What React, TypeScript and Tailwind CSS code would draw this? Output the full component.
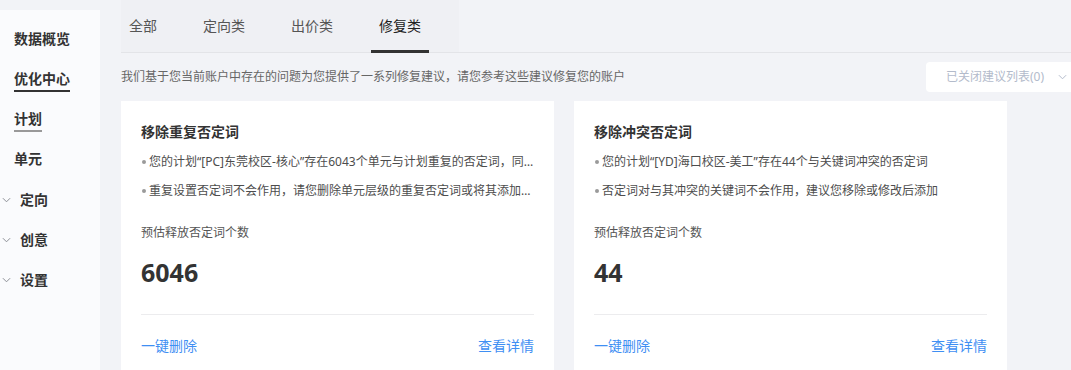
import React from 'react';

const FONT = { fontFamily: '"Noto Sans", "Noto Sans CJK SC", sans-serif' };

const Chevron: React.FC<{ className?: string }> = ({ className = '' }) => (
  <svg viewBox="0 0 10 6" className={className} fill="none" stroke="currentColor" strokeWidth="1.1">
    <path d="M1 1l4 4 4-4" />
  </svg>
);

type NavItem = { label: string; chevron?: boolean; line?: 'dark' | 'gray' };

const navItems: NavItem[] = [
  { label: '数据概览' },
  { label: '优化中心', line: 'dark' },
  { label: '计划', line: 'gray' },
  { label: '单元' },
  { label: '定向', chevron: true },
  { label: '创意', chevron: true },
  { label: '设置', chevron: true },
];

const tabs = ['全部', '定向类', '出价类', '修复类'];

const cards = [
  {
    title: '移除重复否定词',
    bullets: [
      '您的计划“[PC]东莞校区-核心”存在6043个单元与计划重复的否定词，同时这些否定词在计划层级已经设置',
      '重复设置否定词不会作用，请您删除单元层级的重复否定词或将其添加到计划层级',
    ],
    value: '6046',
  },
  {
    title: '移除冲突否定词',
    bullets: [
      '您的计划“[YD]海口校区-美工”存在44个与关键词冲突的否定词',
      '否定词对与其冲突的关键词不会作用，建议您移除或修改后添加',
    ],
    value: '44',
  },
];

const Sidebar: React.FC = () => (
  <div className="w-[100px] shrink-0 mt-[10px] bg-[#fafbfd] pt-[9px]">
    {navItems.map((item) => (
      <div key={item.label} className="h-[40px] flex items-center">
        {item.chevron ? (
          <>
            <div className="w-[20px] pl-[2px] pt-[1px]">
              <Chevron className="w-[9px] h-[6px] text-[#8a8d94]" />
            </div>
            <span className="text-[14px] font-semibold text-[#333]">{item.label}</span>
          </>
        ) : (
          <span
            className={`ml-[14px] text-[14px] font-semibold text-[#333] leading-[20px] ${
              item.line === 'dark'
                ? 'border-b-2 border-[#333] pb-[1px] mt-[3px]'
                : item.line === 'gray'
                ? 'border-b-2 border-[#999] pb-[1px] mt-[3px]'
                : ''
            }`}
          >
            {item.label}
          </span>
        )}
      </div>
    ))}
  </div>
);

const Card: React.FC<{ title: string; bullets: string[]; value: string }> = ({ title, bullets, value }) => (
  <div className="bg-white px-5 pt-[20px] pb-5">
    <div className="text-[14px] font-semibold text-[#333] leading-[22px]">{title}</div>
    <ul className="mt-[9px] space-y-[9px]">
      {bullets.map((b) => (
        <li key={b} className="flex items-center text-[12px] leading-[20px] text-[#4d4d4d]">
          <span className="w-[4px] h-[4px] rounded-full bg-[#9a9a9a] shrink-0 ml-[1px] mr-[3px]" />
          <span className="truncate">{b}</span>
        </li>
      ))}
    </ul>
    <div className="mt-[22px] text-[12px] leading-[20px] text-[#555]">预估释放否定词个数</div>
    <div
      className="mt-[12px] text-[25px] leading-[34px] font-bold text-[#333]"
      style={{ fontFamily: '"Open Sans", "Noto Sans", sans-serif' }}
    >
      {value}
    </div>
    <div className="mt-[25px] h-px bg-[#ececee]" />
    <div className="mt-[21px] flex justify-between text-[14px] leading-[20px] text-[#3f8ff3]">
      <span>一键删除</span>
      <span>查看详情</span>
    </div>
  </div>
);

export default function App() {
  return (
    <div className="w-[1071px] h-[370px] bg-[#f2f3f7] flex overflow-hidden" style={FONT}>
      <Sidebar />
      <div className="ml-[21px] flex-1 min-w-0">
        <div className="h-[53px] border-b border-[#e3e4e8] flex">
          <div className="flex gap-[30px] pr-[30px] bg-[#eff0f4] h-full">
            {tabs.map((t, i) => (
              <div
                key={t}
                className={`relative px-2 h-full flex items-center text-[14px] ${
                  i === 3 ? 'text-[#222]' : 'text-[#555]'
                }`}
              >
                <span className="-mt-[1px]">{t}</span>
                {i === 3 && <span className="absolute left-0 right-0 -bottom-px h-[3px] bg-[#333]" />}
              </div>
            ))}
          </div>
        </div>
        <div className="flex items-center justify-between mt-[9px] -mr-[20px]">
          <span className="text-[12px] text-[#666]">
            我们基于您当前账户中存在的问题为您提供了一系列修复建议，请您参考这些建议修复您的账户
          </span>
          <div className="w-[165px] h-[30px] shrink-0 bg-white rounded-[4px] flex items-center pl-[20px] pr-[4px] text-[12px] text-[#b3bbcb]">
            <span>已关闭建议列表(0)</span>
            <Chevron className="w-[9px] h-[6px] ml-[14px] text-[#b3bbcb]" />
          </div>
        </div>
        <div className="mt-[9px] grid grid-cols-[433px_433px] gap-[20px]">
          {cards.map((c) => (
            <Card key={c.title} {...c} />
          ))}
        </div>
      </div>
    </div>
  );
}
